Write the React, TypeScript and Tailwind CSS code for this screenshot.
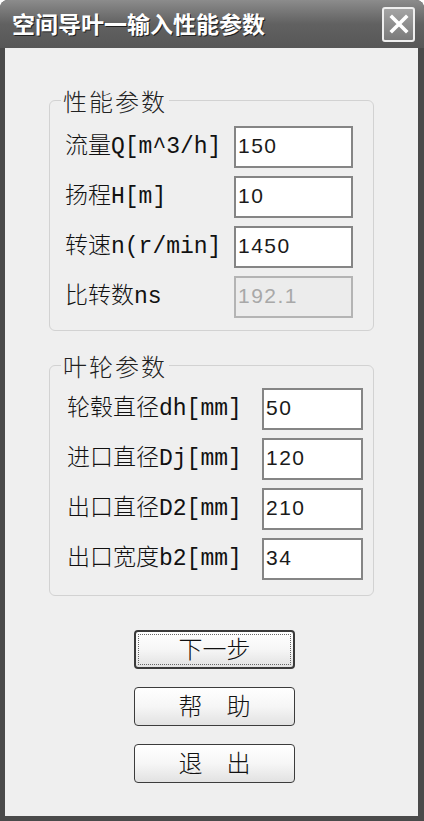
import React from "react";

const labelFont = {
  fontFamily: '"Liberation Mono", "Noto Sans CJK SC", monospace',
};

function Row({
  label,
  value,
  labelW,
  inputW,
  disabled,
}: {
  label: string;
  value: string;
  labelW: string;
  inputW: string;
  disabled?: boolean;
}) {
  return (
    <div className="flex items-center h-[42px]">
      <div
        className={`${labelW} text-[23px] leading-[26px] font-light text-[#111] whitespace-nowrap`}
        style={labelFont}
      >
        {label}
      </div>
      <div
        className={`${inputW} h-[42px] border-2 flex items-center pl-[2px] pb-[3px] text-[21px] tracking-[1.5px] font-['Liberation_Sans',sans-serif] ${
          disabled
            ? "bg-[#ececec] border-[#b4b4b4] text-[#a8a8a8]"
            : "bg-white border-[#858585] text-[#1a1a1a]"
        }`}
      >
        {value}
      </div>
    </div>
  );
}

function Group({
  title,
  children,
  pt,
  pb,
  pl,
  mt,
}: {
  title: string;
  children: React.ReactNode;
  pt: string;
  pb: string;
  pl: string;
  mt: string;
}) {
  return (
    <div
      className={`relative ${mt} ml-[44px] w-[325px] border border-[#d2d2d2] rounded-[6px] ${pt} ${pb} ${pl}`}
    >
      <span className="absolute -top-[13px] left-[11px] px-[2px] bg-[#efefef] text-[24px] leading-[26px] tracking-[2px] font-light text-[#222] font-['Noto_Sans_CJK_SC',sans-serif]">
        {title}
      </span>
      <div className="flex flex-col gap-[8px]">{children}</div>
    </div>
  );
}

function Btn({ text, focused }: { text: string; focused?: boolean }) {
  return (
    <div
      className={`relative w-[161px] h-[39px] rounded-[4px] flex items-center justify-center pb-[3px] text-[24px] font-light text-[#111] font-['Noto_Sans_CJK_SC',sans-serif] bg-gradient-to-b from-white via-[#f6f6f6] to-[#e2e2e2] ${
        focused ? "border-2 border-[#3a3a3a]" : "border-[1.5px] border-[#3c3c3c]"
      }`}
    >
      {focused && (
        <div className="absolute inset-[2px] border border-dotted border-[#666] rounded-[1px]" />
      )}
      <span className="relative whitespace-pre">{text}</span>
    </div>
  );
}

export default function App() {
  return (
    <div className="w-[424px] h-[821px] bg-[#4a4a4a] rounded-t-[8px] overflow-hidden flex flex-col">
      {/* title bar */}
      <div className="h-[48px] shrink-0 flex items-center justify-between pl-[12px] pr-[9px] bg-gradient-to-b from-[#8c8c8c] via-[#616161] to-[#575757]">
        <div className="text-[23px] font-bold text-white leading-none pb-[2px] [text-shadow:1px_1px_0_#202020] font-['Noto_Sans_CJK_SC',sans-serif]">
          空间导叶一输入性能参数
        </div>
        <div className="w-[33px] h-[35px] rounded-[3px] border-2 border-[#eeeeee] bg-gradient-to-b from-[#a4a4a4] to-[#7a7a7a] flex items-center justify-center">
          <svg width="22" height="22" viewBox="0 0 22 22">
            <path
              d="M4 4 L18 18 M18 4 L4 18"
              stroke="white"
              strokeWidth="3.6"
              strokeLinecap="square"
            />
          </svg>
        </div>
      </div>
      {/* client */}
      <div className="flex-1 ml-[5px] mr-[6px] mb-[5px] bg-[#efefef] flex flex-col">
        <Group title="性能参数" mt="mt-[52px]" pt="pt-[25px]" pb="pb-[12px]" pl="pl-[15px]">
          <Row label="流量Q[m^3/h]" value="150" labelW="w-[169px]" inputW="w-[119px]" />
          <Row label="扬程H[m]" value="10" labelW="w-[169px]" inputW="w-[119px]" />
          <Row label="转速n(r/min]" value="1450" labelW="w-[169px]" inputW="w-[119px]" />
          <Row label="比转数ns" value="192.1" labelW="w-[169px]" inputW="w-[119px]" disabled />
        </Group>
        <Group title="叶轮参数" mt="mt-[34px]" pt="pt-[22px]" pb="pb-[15px]" pl="pl-[17px]">
          <Row label="轮毂直径dh[mm]" value="50" labelW="w-[195px]" inputW="w-[101px]" />
          <Row label="进口直径Dj[mm]" value="120" labelW="w-[195px]" inputW="w-[101px]" />
          <Row label="出口直径D2[mm]" value="210" labelW="w-[195px]" inputW="w-[101px]" />
          <Row label="出口宽度b2[mm]" value="34" labelW="w-[195px]" inputW="w-[101px]" />
        </Group>
        <div className="mt-[34px] ml-[129px] flex flex-col gap-[18px]">
          <Btn text="下一步" focused />
          <Btn text="帮　助" />
          <Btn text="退　出" />
        </div>
      </div>
    </div>
  );
}
